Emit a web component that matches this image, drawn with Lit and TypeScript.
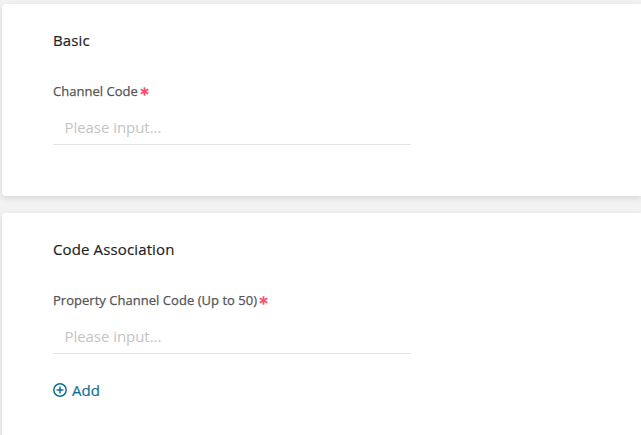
import { LitElement, html, css } from "lit";
import { customElement } from "lit/decorators.js";

@customElement("app-root")
export class AppRoot extends LitElement {
  static styles = css`
    :host {
      display: block;
      height: 435px;
      overflow: hidden;
      background: #f2f2f2;
      font-family: "Open Sans", sans-serif;
    }
    .page {
      display: flex;
      flex-direction: column;
      gap: 17px;
      padding: 4px 0 0 2px;
    }
    .card {
      background: #fff;
      border-radius: 4px 0 0 4px;
      box-shadow: 0 2px 6px rgba(0, 0, 0, 0.12);
      padding: 26px 0 0 51px;
      box-sizing: border-box;
    }
    .first { height: 192px; }
    .second { height: 240px; }
    .title {
      font-size: 15px;
      line-height: 20px;
      font-weight: 500;
      color: #1f1f1f;
      letter-spacing: 0.13px;
      -webkit-text-stroke: 0.2px #1f1f1f;
    }
    .label {
      margin-top: 30px;
      font-size: 13px;
      line-height: 20px;
      font-weight: 500;
      letter-spacing: 0.03px;
      color: #555;
      -webkit-text-stroke: 0.25px #555;
      display: flex;
      align-items: center;
      padding-top: 1px;
    }
    .star {
      margin-left: 2px;
      display: block;
    }
    .input {
      width: 358px;
      height: 36px;
      margin-top: 8px;
      padding-left: 12px;
      box-sizing: border-box;
      border-bottom: 1px solid #e5e5e5;
      font-size: 15px;
      line-height: 36px;
      letter-spacing: -0.05px;
      color: #c4c4c4;
      text-indent: -0.5px;
    }
    .add {
      margin-top: 26px;
      display: flex;
      align-items: center;
      gap: 5px;
      font-size: 15px;
      line-height: 20px;
      font-weight: 500;
      color: #0f6f94;
      -webkit-text-stroke: 0.2px #0f6f94;
    }
    .add svg { display: block; }
  `;

  private star() {
    return html`<svg class="star" width="9" height="9" viewBox="0 0 9 9" fill="none" stroke="#ff4d6a" stroke-width="1.8">
      <path d="M4.5 0.2v8.6M0.7 2.3l7.6 4.4M8.3 2.3L0.7 6.7"></path>
    </svg>`;
  }

  render() {
    return html`
      <div class="page">
        <section class="card first">
          <div class="title">Basic</div>
          <div class="label">Channel Code${this.star()}</div>
          <div class="input">Please input...</div>
        </section>
        <section class="card second">
          <div class="title">Code Association</div>
          <div class="label">Property Channel Code (Up to 50)${this.star()}</div>
          <div class="input">Please input...</div>
          <div class="add">
            <svg width="14" height="14" viewBox="0 0 14 14" fill="none" stroke="currentColor" stroke-width="1.5">
              <circle cx="7" cy="7" r="6.2"></circle>
              <path d="M7 3.6v6.8M3.6 7h6.8"></path>
            </svg>
            <span>Add</span>
          </div>
        </section>
      </div>
    `;
  }
}
